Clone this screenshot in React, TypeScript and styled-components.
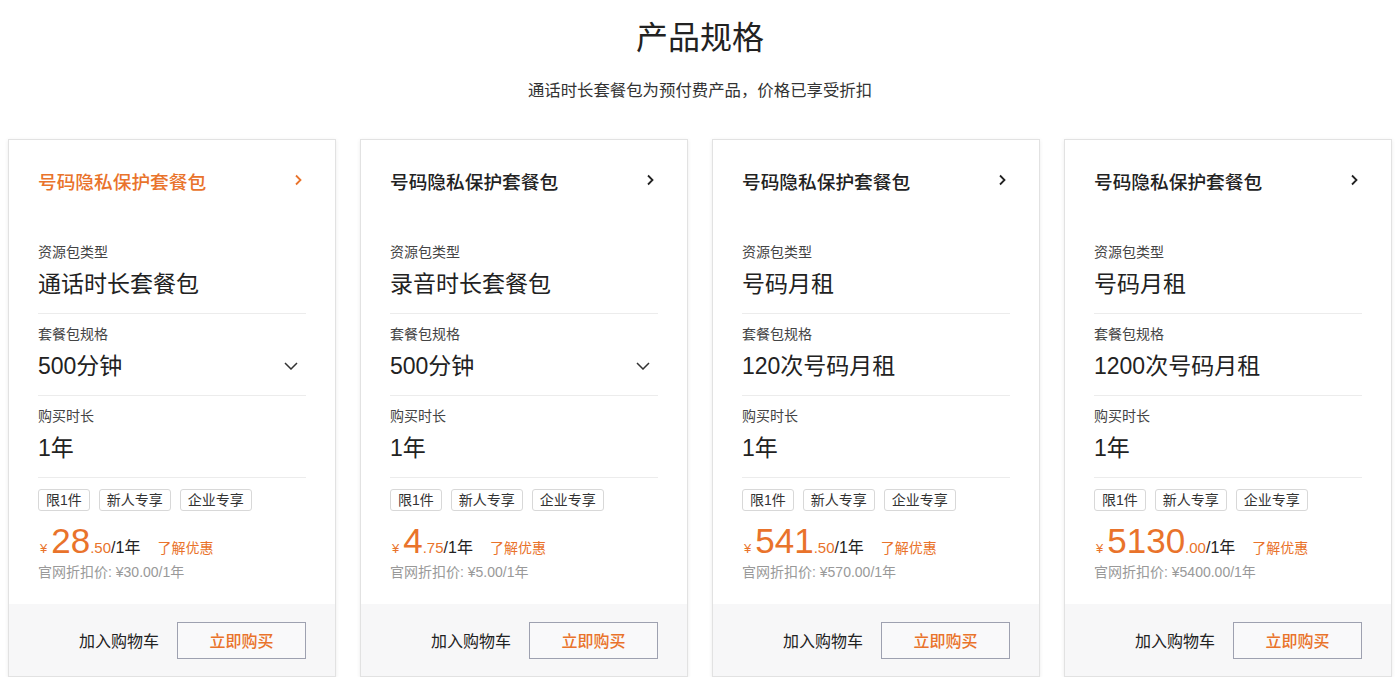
import React from 'react'
import styled, { createGlobalStyle } from 'styled-components'

const ORANGE = '#e9732b'
const INK = '#222'

const GlobalStyle = createGlobalStyle`
  body {
    margin: 0;
    background: #fff;
    font-family: 'Liberation Sans', 'Noto Sans CJK SC', sans-serif;
    color: ${INK};
  }
`

const Page = styled.div`
  width: 1400px;
  padding: 16px 8px 0;
  box-sizing: border-box;
`

const Header = styled.header`
  display: flex;
  flex-direction: column;
  align-items: center;
  margin-bottom: 39px;
  h1 {
    margin: 0;
    font-size: 32px;
    line-height: 44px;
    font-weight: 400;
    color: ${INK};
  }
  p {
    margin: 20px 0 0;
    font-size: 16.4px;
    line-height: 20px;
    color: #333;
  }
`

const CardRow = styled.div`
  display: flex;
  gap: 24px;
`

const Card = styled.div`
  flex: 1;
  display: flex;
  flex-direction: column;
  border: 1px solid #e2e2e2;
  box-shadow: 0 1px 4px rgba(0, 0, 0, 0.08);
  background: #fff;
`

const Body = styled.div`
  padding: 28px 29px 23px;
`

const TitleRow = styled.div<{ $active?: boolean }>`
  display: flex;
  align-items: center;
  justify-content: space-between;
  height: 24px;
  margin-bottom: 40px;
  font-size: 18.7px;
  font-weight: 500;
  color: ${(p) => (p.$active ? ORANGE : INK)};
  svg {
    margin-right: 4px;
  }
`

const Section = styled.div`
  padding: 10px 0 14px;
  border-bottom: 1px solid #ececec;
`

const Label = styled.div`
  font-size: 14px;
  line-height: 20px;
  color: #444;
`

const Value = styled.div`
  display: flex;
  align-items: center;
  justify-content: space-between;
  margin-top: 7px;
  font-size: 23px;
  line-height: 30px;
  color: ${INK};
  svg {
    margin-right: 8px;
  }
`

const Tags = styled.div`
  display: flex;
  gap: 9px;
  margin-top: 11px;
`

const Tag = styled.span`
  font-size: 14px;
  line-height: 20px;
  padding: 0 7px;
  border: 1px solid #d8d8d8;
  border-radius: 3px;
  color: #333;
`

const PriceLine = styled.div`
  display: flex;
  align-items: baseline;
  margin-top: 12px;
  height: 36px;
  color: ${ORANGE};
  .yen {
    font-size: 13px;
    margin: 0 4px 0 2px;
  }
  .int {
    font-size: 35px;
    line-height: 36px;
  }
  .dec {
    font-size: 15px;
  }
  .unit {
    font-size: 16px;
    color: ${INK};
  }
  .more {
    font-size: 14px;
    margin-left: 17px;
  }
`

const Original = styled.div`
  font-size: 14px;
  line-height: 18px;
  margin-top: 4px;
  color: #999;
`

const Footer = styled.div`
  flex-shrink: 0;
  display: flex;
  align-items: center;
  justify-content: flex-end;
  gap: 18px;
  height: 72px;
  padding: 0 29px;
  background: #f7f7f8;
  font-size: 16px;
  color: ${INK};
`

const BuyButton = styled.button`
  width: 129px;
  height: 37px;
  border: 1px solid #9ea1b0;
  background: #f9f9fa;
  color: ${ORANGE};
  font: 500 16px 'Liberation Sans', 'Noto Sans CJK SC', sans-serif;
  cursor: pointer;
`

const ChevronRight = () => (
  <svg width='8' height='12' viewBox='0 0 8 12' fill='none'>
    <path d='M2 1.5L6.5 6L2 10.5' stroke='currentColor' strokeWidth='1.8' />
  </svg>
)

const ChevronDown = () => (
  <svg width='14' height='8' viewBox='0 0 14 8' fill='none'>
    <path d='M1 1L7 7L13 1' stroke='#333' strokeWidth='1.5' />
  </svg>
)

type Plan = {
  type: string
  spec: string
  select: boolean
  int: string
  dec: string
  original: string
}

const plans: Plan[] = [
  { type: '通话时长套餐包', spec: '500分钟', select: true, int: '28', dec: '.50', original: '¥30.00/1年' },
  { type: '录音时长套餐包', spec: '500分钟', select: true, int: '4', dec: '.75', original: '¥5.00/1年' },
  { type: '号码月租', spec: '120次号码月租', select: false, int: '541', dec: '.50', original: '¥570.00/1年' },
  { type: '号码月租', spec: '1200次号码月租', select: false, int: '5130', dec: '.00', original: '¥5400.00/1年' },
]

export default function App() {
  return (
    <Page>
      <GlobalStyle />
      <Header>
        <h1>产品规格</h1>
        <p>通话时长套餐包为预付费产品，价格已享受折扣</p>
      </Header>
      <CardRow>
        {plans.map((plan, i) => (
          <Card key={i}>
            <Body>
              <TitleRow $active={i === 0}>
                <span>号码隐私保护套餐包</span>
                <ChevronRight />
              </TitleRow>
              <Section>
                <Label>资源包类型</Label>
                <Value>{plan.type}</Value>
              </Section>
              <Section>
                <Label>套餐包规格</Label>
                <Value>
                  <span>{plan.spec}</span>
                  {plan.select && <ChevronDown />}
                </Value>
              </Section>
              <Section>
                <Label>购买时长</Label>
                <Value>1年</Value>
              </Section>
              <Tags>
                <Tag>限1件</Tag>
                <Tag>新人专享</Tag>
                <Tag>企业专享</Tag>
              </Tags>
              <PriceLine>
                <span className='yen'>¥</span>
                <span className='int'>{plan.int}</span>
                <span className='dec'>{plan.dec}</span>
                <span className='unit'>/1年</span>
                <span className='more'>了解优惠</span>
              </PriceLine>
              <Original>官网折扣价: {plan.original}</Original>
            </Body>
            <Footer>
              <span>加入购物车</span>
              <BuyButton>立即购买</BuyButton>
            </Footer>
          </Card>
        ))}
      </CardRow>
    </Page>
  )
}
